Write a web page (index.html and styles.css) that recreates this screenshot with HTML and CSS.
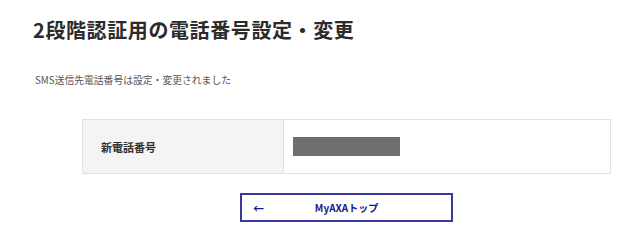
FILE: index.html
```html
<!DOCTYPE html>
<html lang="ja">
<head>
    <meta charset="UTF-8">
    <meta name="viewport" content="width=device-width, initial-scale=1.0">
    <title>2段階認証用の電話番号設定・変更</title>
    <link rel="stylesheet" href="styles.css">
</head>
<body>
    <h1 class="page-title">2段階認証用の電話番号設定・変更</h1>
    <p class="notice">SMS送信先電話番号は設定・変更されました</p>

    <div class="content">
        <table class="info-table">
            <tr>
                <th>新電話番号</th>
                <td><span class="masked"></span></td>
            </tr>
        </table>

        <div class="actions">
            <a class="back-button" href="#">
                <span class="arrow">&larr;</span>
                <span class="label">MyAXAトップ</span>
            </a>
        </div>
    </div>
</body>
</html>
```

FILE: styles.css
```css
/* ページ全体 */
body {
    margin: 0;
    background-color: #fff;
    color: #333;
    font-family: "Noto Sans CJK JP", "Noto Sans", sans-serif;
}

/* 見出し */
.page-title {
    margin: 0;
    padding: 16px 0 0 33px;
    font-size: 20px;
    line-height: 28px;
    letter-spacing: 0.6px;
    font-weight: bold;
    color: #2b2b2b;
}

/* 完了メッセージ */
.notice {
    margin: 0;
    padding: 29px 0 0 35px;
    font-size: 9.8px;
    line-height: 14px;
    color: #555;
}

/* 本文エリア */
.content {
    margin: 0 19px 0 82px;
    padding-top: 32px;
}

/* 情報テーブル */
.info-table {
    width: 100%;
    border-collapse: collapse;
}

.info-table th,
.info-table td {
    height: 53px;
    border: 1px solid #e2e2e2;
    vertical-align: middle;
}

.info-table th {
    width: 182px;
    padding: 0 0 0 18px;
    background-color: #f4f4f4;
    text-align: left;
    font-size: 11px;
    font-weight: bold;
    color: #333;
}

.info-table td {
    padding: 0 0 0 9px;
}

/* 伏せ字部分 */
.masked {
    display: block;
    width: 107px;
    height: 19px;
    background-color: #6f6f6f;
}

/* ボタン */
.actions {
    display: flex;
    justify-content: center;
    padding-top: 19px;
}

.back-button {
    display: flex;
    align-items: center;
    width: 209px;
    height: 25px;
    border: 2px solid #3a3a9c;
    text-decoration: none;
    color: #1a1a86;
    font-size: 10px;
    font-weight: bold;
}

.back-button .arrow {
    width: 12px;
    margin-left: 11px;
    font-size: 11px;
}

.back-button .label {
    flex: 1;
    text-align: center;
    margin-right: 23px;
}
```
